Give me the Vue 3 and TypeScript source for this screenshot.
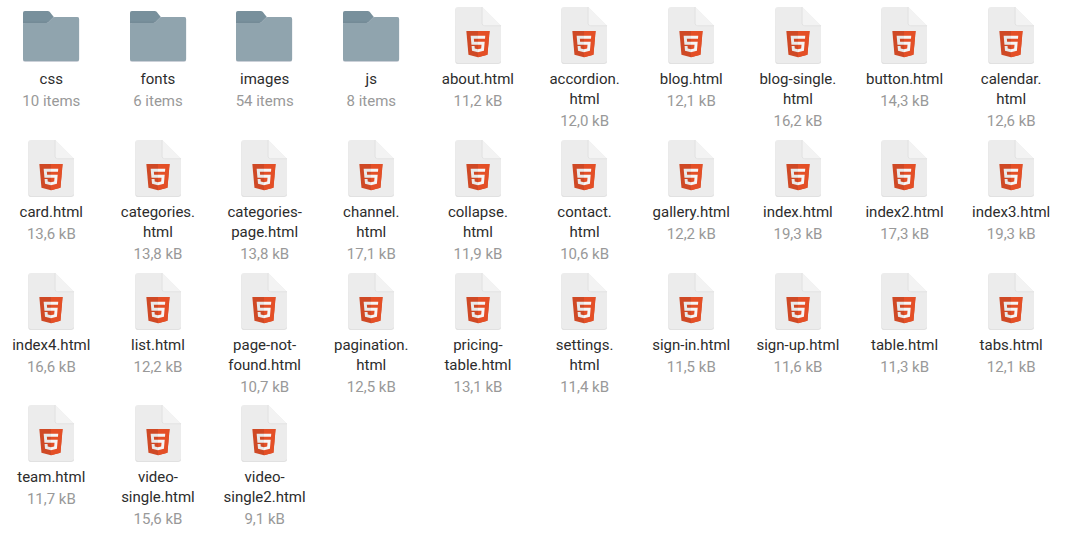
<script setup lang="ts">
interface Entry {
  lines: string[]
  info: string
  folder?: boolean
}

const folder = (name: string, info: string): Entry => ({ lines: [name], info, folder: true })
const file = (info: string, ...lines: string[]): Entry => ({ lines, info })

const entries: Entry[] = [
  folder('css', '10 items'),
  folder('fonts', '6 items'),
  folder('images', '54 items'),
  folder('js', '8 items'),
  file('11,2 kB', 'about.html'),
  file('12,0 kB', 'accordion.', 'html'),
  file('12,1 kB', 'blog.html'),
  file('16,2 kB', 'blog-single.', 'html'),
  file('14,3 kB', 'button.html'),
  file('12,6 kB', 'calendar.', 'html'),
  file('13,6 kB', 'card.html'),
  file('13,8 kB', 'categories.', 'html'),
  file('13,8 kB', 'categories-', 'page.html'),
  file('17,1 kB', 'channel.', 'html'),
  file('11,9 kB', 'collapse.', 'html'),
  file('10,6 kB', 'contact.', 'html'),
  file('12,2 kB', 'gallery.html'),
  file('19,3 kB', 'index.html'),
  file('17,3 kB', 'index2.html'),
  file('19,3 kB', 'index3.html'),
  file('16,6 kB', 'index4.html'),
  file('12,2 kB', 'list.html'),
  file('10,7 kB', 'page-not-', 'found.html'),
  file('12,5 kB', 'pagination.', 'html'),
  file('13,1 kB', 'pricing-', 'table.html'),
  file('11,4 kB', 'settings.', 'html'),
  file('11,5 kB', 'sign-in.html'),
  file('11,6 kB', 'sign-up.html'),
  file('11,3 kB', 'table.html'),
  file('12,1 kB', 'tabs.html'),
  file('11,7 kB', 'team.html'),
  file('15,6 kB', 'video-', 'single.html'),
  file('9,1 kB', 'video-', 'single2.html'),
]
</script>

<template>
  <main class="view">
    <div v-for="(entry, i) in entries" :key="i" class="entry">
      <svg v-if="entry.folder" class="icon" viewBox="0 0 64 64">
        <path d="M5.8 8H28.6q1.3 0 2 .8L34.8 14v8H4V9.8Q4 8 5.8 8z" fill="#78909c" />
        <path d="M4 18.6h28v2.4H4z" fill="#708691" opacity=".5" />
        <path d="M4 21.6Q4 20 5.8 20h21.5q1.3 0 2.2-1l4.3-4.2q.8-.8 2-.8h22.5q1.8 0 1.8 1.8v41.1q0 1.9-1.8 1.9H5.8Q4 58.8 4 56.9z" fill="#d5d5de" />
        <path d="M4 21.6Q4 20 5.8 20h21.5q1.3 0 2.2-1l4.3-4.2q.8-.8 2-.8h22.5q1.8 0 1.8 1.8v40.5q0 1.9-1.8 1.9H5.8Q4 58.2 4 56.3z" fill="#90a4ae" />
      </svg>
      <svg v-else class="icon" viewBox="0 0 64 64">
        <path d="M12 4.8h24L55 24v34.5q0 2.3-2.6 2.3H12q-2.6 0-2.6-2.3V7.2q0-2.4 2.6-2.4z" fill="#d7d7d7" />
        <path d="M12 4h24.3L55 22.7v34.9q0 2.4-2.6 2.4H12q-2.6 0-2.6-2.4V6.4Q9.4 4 12 4z" fill="#ececec" />
        <path d="M36.3 4v16.4q0 2.6 2.6 2.6H55" fill="#f3f3f3" />
        <path d="M36.1 4v16.4q0 2.3 2.6 2.3H55" fill="none" stroke="#dadada" stroke-width=".6" />
        <g transform="translate(18.8 28) scale(.0515)">
          <path d="M71 460 30 0h451l-41 460-185 52z" fill="#cf4925" />
          <path d="M256 0h225l-41 460-184 52z" fill="#e44f26" />
          <path d="M256 208H181l-5-58h80V94H114l1 15 14 156h127zM256 355l-63-17-4-45h-57l8 89 116 32z" fill="#e9e9e9" />
          <path d="M255 208v57h70l-7 73-63 17v59l116-32 1-10 13-149 2-15zM255 94v56h137l1-13 3-28 1-15z" fill="#f5f5f5" />
        </g>
      </svg>
      <span class="name"><span v-for="line in entry.lines" :key="line" class="line">{{ line }}</span></span>
      <span class="info">{{ entry.info }}</span>
    </div>
  </main>
</template>

<style>
html,
body {
  margin: 0;
  background: #fff;
  overflow: hidden;
}
</style>

<style scoped>
.view {
  box-sizing: border-box;
  width: 1077px;
  height: 552px;
  padding-top: 3px;
  display: grid;
  grid-template-columns: repeat(10, 106.67px);
  grid-auto-rows: 132.75px;
  justify-content: start;
  align-content: start;
  margin-left: -2.4px;
  background: #fff;
  font-family: Roboto, "Liberation Sans", sans-serif;
  font-size: 15px;
  line-height: 20px;
}

.entry {
  display: flex;
  flex-direction: column;
  align-items: center;
  text-align: center;
}

.icon {
  display: block;
  width: 64px;
  height: 64px;
  flex: none;
}

.name {
  margin-top: 2px;
  padding-left: 0.7px;
  color: #2c2c2c;
}

.line {
  display: block;
  white-space: nowrap;
}

.info {
  margin-top: 2px;
  padding-left: 0.8px;
  color: #999;
  white-space: nowrap;
}
</style>
